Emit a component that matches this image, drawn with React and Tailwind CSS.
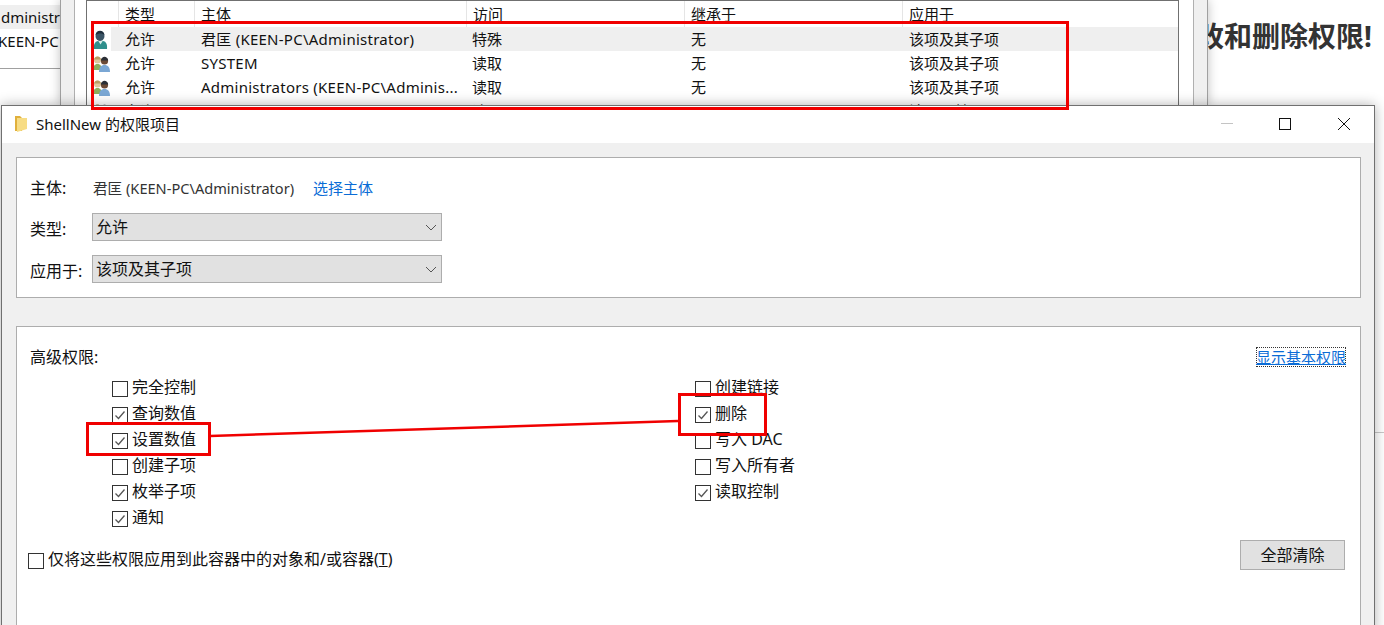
import React from 'react';

const font = "font-['Noto_Sans','Noto_Sans_CJK_SC',sans-serif]";

const UserIcon = () => (
  <svg width="15" height="19" viewBox="0 0 15 19">
    <path d="M1 19c-.5-5 1-8.500 6.500-8.500S14.500 14 14 19z" fill="#2f8f8c" />
    <path d="M5 10.500l2.500 4 2.500-4z" fill="#d8ece8" />
    <ellipse cx="7" cy="6" rx="4.500" ry="5" fill="#3b5566" />
    <path d="M2.500 5c.5-5 8-6 9 0-2-2-6-2-9 0z" fill="#1e2f3d" />
  </svg>
);

const GroupIcon = () => (
  <svg width="17" height="17" viewBox="0 0 17 17">
    <path d="M0 15c0-3.500 1.500-6 4.500-6S9 11.500 9 15z" fill="#8cad5c" />
    <circle cx="4.500" cy="5" r="3.500" fill="#dcc79c" />
    <path d="M1 4.500c1-4 6-4 7 0z" fill="#b79c63" />
    <path d="M6 17c0-4.500 2-7 5.500-7s5.500 2.500 5.500 7z" fill="#7aa7d4" />
    <circle cx="11.500" cy="6" r="3.600" fill="#6b4a35" />
    <path d="M7.800 5.500c1-5 6.500-5 7.400 0z" fill="#2b2f36" />
  </svg>
);

const rows = [
  { icon: <UserIcon />, who: '君匡 (KEEN-PC\\Administrator)', access: '特殊', active: true },
  { icon: <GroupIcon />, who: 'SYSTEM', access: '读取' },
  { icon: <GroupIcon />, who: 'Administrators (KEEN-PC\\Adminis...', access: '读取' },
  { icon: <GroupIcon />, who: 'Users (KEEN-PC\\Users)', access: '读取' },
];

const leftPerms = [
  ['完全控制', false],
  ['查询数值', true],
  ['设置数值', true],
  ['创建子项', false],
  ['枚举子项', true],
  ['通知', true],
];

const rightPerms = [
  ['创建链接', false],
  ['删除', true],
  ['写入 DAC', false],
  ['写入所有者', false],
  ['读取控制', true],
];

const Checkbox = ({ checked }) => (
  <span className="w-4 h-4 shrink-0 border border-[#333333] bg-white flex items-center justify-center">
    {checked && (
      <svg width="12" height="12" viewBox="0 0 12 12" fill="none">
        <path d="M1.500 6.500L4.500 9.500L10.500 2.500" stroke="#555555" strokeWidth="1.300" />
      </svg>
    )}
  </span>
);

const Perm = ({ label, checked }) => (
  <div className="h-[26px] flex items-center gap-1">
    <Checkbox checked={checked} />
    <span className="-mt-[4px] text-[16px]">{label}</span>
  </div>
);

const Select = ({ value }) => (
  <div className="w-[350px] h-[28px] bg-[#e1e1e1] border border-[#adadad] pl-[3px] pr-[3px] flex items-center justify-between text-[16px]">
    <span>{value}</span>
    <svg width="12" height="12" viewBox="0 0 12 12" fill="none" className="mr-[1px]">
      <path d="M1 4L6 9L11 4" stroke="#555555" strokeWidth="1" />
    </svg>
  </div>
);

export default function App() {
  return (
    <div className={`relative w-[1384px] h-[625px] overflow-hidden bg-white text-[15px] leading-[20px] text-[#111111] ${font}`}>
      {/* page behind, left */}
      <div className="absolute left-0 top-0 w-[60px]">
        <div className="mt-[5px] h-[24px] bg-[#efefef] whitespace-nowrap overflow-hidden flex items-center justify-end">dministr</div>
        <div className="h-[24px] whitespace-nowrap overflow-hidden flex items-center justify-start -ml-[2px]">KEEN-PC</div>
        <div className="h-[16px] border-b border-[#a0a0a0]"></div>
      </div>

      {/* page behind, right */}
      <div className="absolute left-[1208px] top-[18px] w-[176px] overflow-hidden flex justify-end whitespace-nowrap text-[28px] leading-[36px] font-bold text-[#333333] pr-[12px]">
        修改和删除权限!
      </div>
      <div className="absolute left-[1375px] top-[432px] w-[9px] border-b border-[#c8c8c8]"></div>

      {/* window behind */}
      <div className="absolute left-[60px] top-0 w-[1148px] h-[106px] bg-[#f0f0f0] border-x border-[#a0a0a0] px-[13px] shadow-[0_0_10px_rgba(0,0,0,0.25)]">
        <div className="h-full bg-white border-x border-[#b0b0b0] pl-[11px] pr-[14px]">
          <div className="h-full border border-[#707070] overflow-hidden">
            <div className="grid grid-cols-[31px_76px_272px_218px_218px_1fr] h-[26px] items-center">
              <div className="h-full"></div>
              {['类型', '主体', '访问', '继承于', '应用于'].map((h) => (
                <div key={h} className="h-full border-l border-[#e5e5e5] pl-[6px] flex items-center">{h}</div>
              ))}
            </div>
            {rows.map((row) => (
              <div key={row.who} className="grid grid-cols-[24px_83px_272px_218px_218px_1fr] h-[24px] items-center">
                <div className="pl-[6px] flex items-center">{row.icon}</div>
                <div className={`h-full pl-[14px] flex items-center ${row.active ? 'bg-[#efefef]' : ''}`}>允许</div>
                <div className={`h-full pl-[7px] flex items-center whitespace-nowrap overflow-hidden tracking-[0.25px] ${row.active ? 'bg-[#efefef]' : ''}`}>{row.who}</div>
                <div className={`h-full pl-[6px] flex items-center ${row.active ? 'bg-[#efefef]' : ''}`}>{row.access}</div>
                <div className={`h-full pl-[7px] flex items-center ${row.active ? 'bg-[#efefef]' : ''}`}>无</div>
                <div className={`h-full pl-[7px] flex items-center ${row.active ? 'bg-[#efefef]' : ''}`}>该项及其子项</div>
              </div>
            ))}
          </div>
        </div>
      </div>

      {/* permission entry dialog */}
      <div className="absolute left-[1px] top-[105px] w-[1374px] h-[530px] bg-[#f0f0f0] border border-[#707070] shadow-[0_0_12px_rgba(0,0,0,0.3)] flex flex-col">
        <div className="h-[37px] shrink-0 bg-white flex items-center pl-[12px] pb-[2px]">
          <svg width="14" height="17" viewBox="0 0 14 17" className="mr-[8px]">
            <path d="M1 1h5l2 2v13H1z" fill="#e0b03c" />
            <path d="M3 3h10v11l-10 3z" fill="#f7dc84" />
          </svg>
          <span>ShellNew 的权限项目</span>
          <div className="ml-auto flex items-center">
            <div className="w-[58px] flex justify-center">
              <div className="w-[12px] border-t border-[#c4c4c4]"></div>
            </div>
            <div className="w-[58px] flex justify-center">
              <div className="w-[12px] h-[12px] border border-[#111111]"></div>
            </div>
            <div className="w-[60px] flex justify-center">
              <svg width="12" height="12" viewBox="0 0 12 12" fill="none">
                <path d="M0 0L12 12M12 0L0 12" stroke="#111111" strokeWidth="1" />
              </svg>
            </div>
          </div>
        </div>

        <div className="pt-[14px] pl-[14px] pr-[13px] flex flex-col gap-[28px]">
          <div className="h-[141px] bg-white border border-[#adadad] pl-[13px] pr-[13px] pt-[20px]">
            <div className="flex items-center h-[20px]">
              <span className="w-[63px] text-[16px]">主体:</span>
              <span className="text-[14.6px] text-[#333333]">君匡 (KEEN-PC\Administrator)</span>
              <span className="ml-[19px] text-[#0a6cd6]">选择主体</span>
            </div>
            <div className="flex items-center mt-[15px]">
              <span className="w-[62px] pt-[3px] text-[16px]">类型:</span>
              <Select value="允许" />
            </div>
            <div className="flex items-center mt-[14px]">
              <span className="w-[62px] pt-[3px] text-[16px]">应用于:</span>
              <Select value="该项及其子项" />
            </div>
          </div>

          <div className="h-[320px] bg-white border border-[#adadad] pl-[13px] pr-[15px] pt-[20px]">
            <div className="flex items-center justify-between h-[20px]">
              <span className="text-[16px]">高级权限:</span>
              <span className="w-[90px] -mr-[1px] -indent-[1px] whitespace-nowrap border border-dotted border-[#333333] text-[#0a6cd6] underline leading-[18px]">显示基本权限</span>
            </div>
            <div className="mt-[9px] pl-[82px] grid grid-cols-[583px_1fr]">
              <div>
                {leftPerms.map(([label, checked]) => (
                  <Perm key={label} label={label} checked={checked} />
                ))}
              </div>
              <div>
                {rightPerms.map(([label, checked]) => (
                  <Perm key={label} label={label} checked={checked} />
                ))}
              </div>
            </div>
            <div className="mt-[8px] flex items-start justify-between">
              <div className="mt-[12px] flex items-center gap-1 -ml-[2px]">
                <Checkbox />
                <span className="-mt-[3px] text-[16px]">仅将这些权限应用到此容器中的对象和/或容器(<span className="underline">T</span>)</span>
              </div>
              <div className="w-[105px] h-[30px] bg-[#e1e1e1] border border-[#adadad] flex items-center justify-center text-[16px]">全部清除</div>
            </div>
          </div>
        </div>
      </div>

      {/* red annotations */}
      <div className="absolute left-[91px] top-[21px] w-[978px] h-[89px] border-[3px] border-[#f00000] pointer-events-none"></div>
      <div className="absolute left-[86px] top-[422px] w-[125px] h-[34px] border-[3px] border-[#f00000] pointer-events-none"></div>
      <div className="absolute left-[678px] top-[393px] w-[89px] h-[43px] border-[3px] border-[#f00000] pointer-events-none"></div>
      <svg className="absolute left-0 top-0 pointer-events-none" width="1384" height="625">
        <line x1="210" y1="436" x2="678" y2="421" stroke="#f00000" strokeWidth="2.500" />
      </svg>
    </div>
  );
}
